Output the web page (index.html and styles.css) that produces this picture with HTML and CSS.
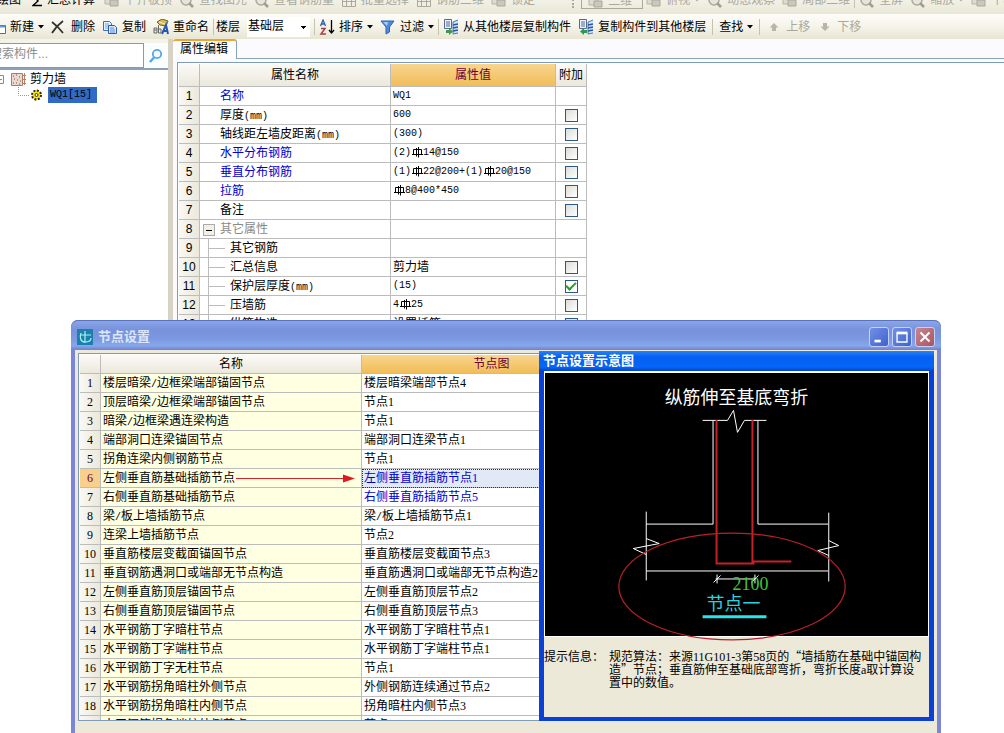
FILE: index.html
```html
<!DOCTYPE html>
<html lang="zh-CN">
<head>
<meta charset="utf-8">
<title>属性编辑</title>
<link rel="stylesheet" href="styles.css">
</head>
<body>
<svg class="defs" aria-hidden="true">
  <symbol id="rebar" viewBox="0 0 12 12"><path d="M5.500 2v8.500M7.500 1v10.500M2.500 8V3.500h8V8M1 8.500h11" fill="none" stroke="#000"/></symbol>
  <symbol id="drop" viewBox="0 0 6 4"><path d="M0 0h6L3 3.500z"/></symbol>
  <symbol id="blob" viewBox="0 0 16 16"><path d="M1 4h9v8H1z" fill="#dddccd" stroke="#b5b4a6"/><path d="M6 8h8v6H6z" fill="#c9c8ba" stroke="#aaa99c"/></symbol>
  <symbol id="grid" viewBox="0 0 16 16"><path d="M1.500 4v10.500h13V4M1 9.500h13M5.500 4v10M10.500 4v10" fill="none" stroke="#aaa99c"/></symbol>
  <symbol id="lens" viewBox="0 0 16 16"><circle cx="7" cy="8" r="5" fill="#e6e5d8" stroke="#aaa99c" stroke-width="1.500"/><path d="M10 11l4 4" stroke="#9f9e92" stroke-width="2.500"/></symbol>
  <symbol id="floors" viewBox="0 0 16 16"><path d="M1.500.500h7v9h-7z" fill="#eef3fb" stroke="#586885"/><path d="M3 3h4M3 5h4M3 7h4" stroke="#4766a4"/><path d="M15 1l-5 2v12l5-1" fill="#cfe0f7" stroke="#4b78b5"/><path d="M10 6l5-1M10 9l5-1M10 12l5-1" stroke="#28599f" stroke-width="1.500"/></symbol>
</svg>

<main class="app">
  <div class="bar bar-top">
    <button class="tool">绘图</button>
    <button class="tool gap-l"><svg width="11" height="16" viewBox="0 0 11 16"><path d="M9 4H2l4 5-5 4.500h9" fill="none" stroke="#000" stroke-width="1.500"/></svg>汇总计算</button>
    <button class="tool off gap-m"><svg class="ic"><use href="#blob"/></svg>平齐板顶</button>
    <button class="tool off"><svg class="ic"><use href="#lens"/></svg>查找图元</button>
    <button class="tool off"><svg class="ic"><use href="#lens"/></svg>查看钢筋量</button>
    <button class="tool off"><svg class="ic"><use href="#grid"/></svg>批量选择</button>
    <button class="tool off"><svg class="ic"><use href="#grid"/></svg>钢筋三维</button>
    <button class="tool off"><svg class="ic"><use href="#blob"/></svg>锁定</button>
    <span class="grip"></span>
    <button class="tool off framed"><svg class="ic"><use href="#blob"/></svg>二维</button>
    <button class="tool off"><svg class="ic"><use href="#blob"/></svg>俯视<svg class="arrow"><use href="#drop"/></svg></button>
    <button class="tool off"><svg class="ic"><use href="#lens"/></svg>动态观察</button>
    <button class="tool off"><svg class="ic"><use href="#blob"/></svg>局部三维</button>
    <span class="sep"></span>
    <button class="tool off"><svg class="ic"><use href="#lens"/></svg>全屏</button>
    <button class="tool off"><svg class="ic"><use href="#lens"/></svg>缩放<svg class="arrow"><use href="#drop"/></svg></button>
    <button class="tool off"><svg class="ic"><use href="#blob"/></svg>平移</button>
  </div>

  <div class="bar bar-edit">
    <button class="tool"><svg width="6" height="16" viewBox="0 0 6 16"><path d="M0 6.500h5.500v8H0" fill="#fff" stroke="#3f73b5"/><path d="M0 7.500h5" stroke="#5b96dd" stroke-width="2"/></svg>新建<svg class="arrow"><use href="#drop"/></svg></button>
    <button class="tool"><svg class="ic" viewBox="0 0 16 16"><path d="M1 3c4 3 8 7 11 11M12 2C8 5 4 9 1 14" fill="none" stroke="#333" stroke-width="1.800"/></svg>删除</button>
    <button class="tool"><svg class="ic" viewBox="0 0 16 16"><path d="M1.500 2.500h6l2 2v7h-8z" fill="#e6f0fd" stroke="#3a6fc0"/><path d="M3 5h4M3 7h4M3 9h3" stroke="#79a5e3"/><path d="M6.500 6.500h6l2 2v6h-8z" fill="#d9e8fc" stroke="#2a5db2"/><path d="M8 9h4M8 11h5M8 13h5" stroke="#5a8cd8"/></svg>复制</button>
    <button class="tool"><svg class="ic" viewBox="0 0 16 16"><path d="M4 3l5-3 6 2-2 5-6-1z" fill="#d8b94e" stroke="#6c6030"/><path d="M6 3l6 2" stroke="#fff1a8"/><path d="M1 9h3v5H1zm0 2h3M5.500 6v8h2.500v-4H6" fill="none" stroke="#666"/><path d="M9 15l4-9 2 9M10 12h5" fill="none" stroke="#2559b8" stroke-width="2"/></svg>重命名</button>
    <span class="sep"></span>
    <label class="floor" for="floor">楼层</label>
    <select id="floor" class="combo"><option>基础层</option></select>
    <span class="sep"></span>
    <button class="tool"><svg class="ic" viewBox="0 0 16 16"><path d="M1.500 7L4 1l2.500 6M2.500 5h3" fill="none" stroke="#2b5fae" stroke-width="1.300"/><path d="M2 9.500h4L2 15h5" fill="none" stroke="#b13b45" stroke-width="1.500"/><path d="M12.500 1v12M10 11l2.500 3 2.500-3" fill="none" stroke="#000" stroke-width="1.300"/></svg>排序<svg class="arrow"><use href="#drop"/></svg></button>
    <button class="tool"><svg class="ic" viewBox="0 0 16 16"><path d="M1 2h13L9.500 8v5L6 15V8z" fill="#4e8ce0" stroke="#2c62b8"/><path d="M3 3h5l-1 4z" fill="#a9cbf7"/></svg>过滤<svg class="arrow"><use href="#drop"/></svg></button>
    <span class="sep"></span>
    <button class="tool"><svg class="ic"><use href="#floors"/><path d="M3 11h3v-2l4 3.500L6 16v-2H3z" fill="#3d9a48"/></svg>从其他楼层复制构件</button>
    <button class="tool"><svg class="ic"><use href="#floors"/><path d="M9 11H6V9l-4 3.500L6 16v-2h3z" fill="#2c9b52"/></svg>复制构件到其他楼层</button>
    <span class="sep wide"></span>
    <button class="tool">查找<svg class="arrow"><use href="#drop"/></svg></button>
    <span class="sep wide"></span>
    <button class="tool off"><svg class="ic" viewBox="0 0 16 16"><path d="M8 4l4.500 4.500H10V12H6V8.500H3.500z" fill="#b7b6a9"/></svg>上移</button>
    <button class="tool off"><svg class="ic" viewBox="0 0 16 16"><path d="M8 12l4.500-4.500H10V4H6v3.500H3.500z" fill="#b7b6a9"/></svg>下移</button>
  </div>

  <div class="work">
    <aside class="side">
      <div class="search">
        <input type="text" class="search-box" placeholder="搜索构件..." aria-label="搜索构件">
        <button class="search-go" aria-label="搜索"><svg width="16" height="16" viewBox="0 0 16 16"><circle cx="9" cy="6" r="4.200" fill="#f1f9ff" stroke="#5aa5e6" stroke-width="1.800"/><path d="M6 9.500L2 14" stroke="#5aa5e6" stroke-width="2.500"/></svg></button>
      </div>
      <ul class="tree">
        <li class="node"><svg width="28" height="16" viewBox="0 0 28 16"><path d="M-4.500 4.500h8v8h-8zM-1 8.500h3" fill="#fff" stroke="#7b8ea6"/><path d="M11.500 2.500h11v12h-11z" fill="#ead9d0" stroke="#a87a68"/><path d="M13 5h1M16 4h1M19 6h1M14 8h1M17 9h1M20 10h1M13 12h1M16 12h1M19 13h1" stroke="#8b4c3c"/><path d="M24.500 2v12M22 4.500h4M22 8.500h4M22 12.500h4" stroke="#b9815f"/></svg>剪力墙</li>
        <li class="node"><svg width="46" height="16" viewBox="0 0 46 16"><path d="M18.500 0v8.500H30" fill="none" stroke="#999" stroke-dasharray="1 1"/><circle cx="36.500" cy="8" r="4.500" fill="#ffe600" stroke="#222" stroke-width="2" stroke-dasharray="2 1.500"/><circle cx="36.500" cy="8" r="1.500" fill="#fff" stroke="#333"/></svg><span class="picked mono">WQ1[15]</span></li>
      </ul>
    </aside>
    <section class="props">
      <div class="tabs"><button class="tab">属性编辑</button></div>
      <div class="sheet">
        <table class="grid prop-grid">
          <colgroup><col class="c-num"><col class="c-name"><col class="c-value"><col class="c-check"></colgroup>
          <thead><tr><th></th><th>属性名称</th><th class="hot">属性值</th><th>附加</th></tr></thead>
          <tbody>
            <tr><th>1</th><td class="name link">名称</td><td class="mono">WQ1</td><td></td></tr>
            <tr><th>2</th><td class="name">厚度<span class="mono">(mm)</span></td><td class="mono">600</td><td class="mark"><input type="checkbox" aria-label="厚度"></td></tr>
            <tr><th>3</th><td class="name">轴线距左墙皮距离<span class="mono">(mm)</span></td><td class="mono">(300)</td><td class="mark"><input type="checkbox" aria-label="轴线距左墙皮距离"></td></tr>
            <tr><th>4</th><td class="name link">水平分布钢筋</td><td class="mono">(2)<svg class="bar-sign"><use href="#rebar"/></svg>14@150</td><td class="mark"><input type="checkbox" aria-label="水平分布钢筋"></td></tr>
            <tr><th>5</th><td class="name link">垂直分布钢筋</td><td class="mono">(1)<svg class="bar-sign"><use href="#rebar"/></svg>22@200+(1)<svg class="bar-sign"><use href="#rebar"/></svg>20@150</td><td class="mark"><input type="checkbox" aria-label="垂直分布钢筋"></td></tr>
            <tr><th>6</th><td class="name link">拉筋</td><td class="mono"><svg class="bar-sign"><use href="#rebar"/></svg>8@400*450</td><td class="mark"><input type="checkbox" aria-label="拉筋"></td></tr>
            <tr><th>7</th><td class="name">备注</td><td></td><td class="mark"><input type="checkbox" aria-label="备注"></td></tr>
            <tr><th>8</th><td class="group"><button class="fold" aria-label="折叠"></button>其它属性</td><td></td><td></td></tr>
            <tr><th>9</th><td class="child">其它钢筋</td><td></td><td></td></tr>
            <tr><th>10</th><td class="child">汇总信息</td><td>剪力墙</td><td class="mark"><input type="checkbox" aria-label="汇总信息"></td></tr>
            <tr><th>11</th><td class="child">保护层厚度<span class="mono">(mm)</span></td><td class="mono">(15)</td><td class="mark"><input type="checkbox" checked aria-label="保护层厚度"></td></tr>
            <tr><th>12</th><td class="child">压墙筋</td><td class="mono">4<svg class="bar-sign"><use href="#rebar"/></svg>25</td><td class="mark"><input type="checkbox" aria-label="压墙筋"></td></tr>
            <tr><th>13</th><td class="child">纵筋构造</td><td>设置插筋</td><td class="mark"><input type="checkbox" aria-label="纵筋构造"></td></tr>
          </tbody>
        </table>
      </div>
    </section>
  </div>
</main>

<section class="dialog" role="dialog" aria-label="节点设置">
  <header class="title">
    <svg class="ic" viewBox="0 0 16 16"><path d="M0 0h16v16H0z" fill="#1d7fae"/><path d="M8 2v12M3 6h11M4 4c-2 5 0 9 4 9s6-2 6-4" fill="none" stroke="#a8f0f4" stroke-width="1.200"/></svg>
    <h1>节点设置</h1>
    <button class="win" aria-label="最小化"><svg viewBox="0 0 20 20"><path d="M5 13h7v3H5z" fill="#fff"/></svg></button>
    <button class="win" aria-label="最大化"><svg viewBox="0 0 20 20"><path d="M4.500 6h11v9.500h-11zM4 6h12" fill="none" stroke="#fff" stroke-width="1.500"/><path d="M4 4h12v3H4z" fill="#fff"/></svg></button>
    <button class="win close" aria-label="关闭"><svg viewBox="0 0 20 20"><path d="M5 5l10 10M15 5L5 15" stroke="#fff" stroke-width="2.200"/></svg></button>
  </header>
  <div class="client">
    <div class="list">
      <table class="grid node-grid">
        <colgroup><col class="c-num"><col class="c-node"><col class="c-pic"></colgroup>
        <thead><tr><th></th><th>名称</th><th class="hot">节点图</th></tr></thead>
        <tbody>
          <tr><th>1</th><td>楼层暗梁<span class="mono">/</span>边框梁端部锚固节点</td><td>楼层暗梁端部节点4</td></tr>
          <tr><th>2</th><td>顶层暗梁<span class="mono">/</span>边框梁端部锚固节点</td><td>节点1</td></tr>
          <tr><th>3</th><td>暗梁<span class="mono">/</span>边框梁遇连梁构造</td><td>节点1</td></tr>
          <tr><th>4</th><td>端部洞口连梁锚固节点</td><td>端部洞口连梁节点1</td></tr>
          <tr><th>5</th><td>拐角连梁内侧钢筋节点</td><td>节点1</td></tr>
          <tr class="current"><th>6</th><td>左侧垂直筋基础插筋节点</td><td class="link">左侧垂直筋插筋节点1</td></tr>
          <tr><th>7</th><td>右侧垂直筋基础插筋节点</td><td class="link">右侧垂直筋插筋节点5</td></tr>
          <tr><th>8</th><td>梁<span class="mono">/</span>板上墙插筋节点</td><td>梁<span class="mono">/</span>板上墙插筋节点1</td></tr>
          <tr><th>9</th><td>连梁上墙插筋节点</td><td>节点2</td></tr>
          <tr><th>10</th><td>垂直筋楼层变截面锚固节点</td><td>垂直筋楼层变截面节点3</td></tr>
          <tr><th>11</th><td>垂直钢筋遇洞口或端部无节点构造</td><td>垂直筋遇洞口或端部无节点构造2</td></tr>
          <tr><th>12</th><td>左侧垂直筋顶层锚固节点</td><td>左侧垂直筋顶层节点2</td></tr>
          <tr><th>13</th><td>右侧垂直筋顶层锚固节点</td><td>右侧垂直筋顶层节点3</td></tr>
          <tr><th>14</th><td>水平钢筋丁字暗柱节点</td><td>水平钢筋丁字暗柱节点1</td></tr>
          <tr><th>15</th><td>水平钢筋丁字端柱节点</td><td>水平钢筋丁字端柱节点1</td></tr>
          <tr><th>16</th><td>水平钢筋丁字无柱节点</td><td>节点1</td></tr>
          <tr><th>17</th><td>水平钢筋拐角暗柱外侧节点</td><td>外侧钢筋连续通过节点2</td></tr>
          <tr><th>18</th><td>水平钢筋拐角暗柱内侧节点</td><td>拐角暗柱内侧节点3</td></tr>
          <tr><th></th><td>水平钢筋拐角端柱外侧节点</td><td>节点3</td></tr>
        </tbody>
      </table>
      <svg class="pointer" width="120" height="10" viewBox="0 0 120 10"><path d="M0 5.500h110" stroke="#d8232a"/><path d="M107 1.500l12 4-12 4z" fill="#e01820"/></svg>
    </div>
    <section class="preview">
      <h2>节点设置示意图</h2>
      <div class="drawing">
        <svg class="cad" viewBox="0 0 384 264">
          <text x="120" y="31" class="cad-title">纵筋伸至基底弯折</text>
          <g fill="none" stroke="#fff">
            <path d="M158 47.500h25l6-10 4 22 7-12h22M168.500 48v103.500h-67M213.500 48v103.500h70.500M101.500 198.500H284M101.500 139v69M284.500 140v69"/>
            <path d="M101.500 166l13 5-26 5 13 6M284.500 168l10 5-21 5 11 5"/>
            <path d="M171 206.500h40M172.500 202v9M210.500 202v9M169 210l7-7M207 210l7-7"/>
          </g>
          <path d="M172 47v144h38M208 47v143M208 189h39" fill="none" stroke="#c8202a" stroke-width="2"/>
          <text x="188" y="218" class="cad-size">2100</text>
          <text x="162" y="238" class="cad-label">节点一</text>
          <path d="M158 244.500h64" stroke="#28e4ee" stroke-width="3"/>
          <ellipse cx="187.500" cy="214" rx="113.500" ry="53.500" fill="none" stroke="#b8202a" stroke-width="1.200"/>
        </svg>
      </div>
      <div class="hint"><span>提示信息：</span><p>规范算法：来源<span class="digits">11G101-3</span>第<span class="digits">58</span>页的“墙插筋在基础中锚固构造”节点；垂直筋伸至基础底部弯折，弯折长度<span class="digits">a</span>取计算设置中的数值。</p></div>
    </section>
  </div>
</section>
</body>
</html>
```

FILE: styles.css
```css
* { box-sizing: border-box; }
body {
  margin: 0;
  height: 100vh;
  overflow: hidden;
  position: relative;
  background: #fff;
  color: #000;
  font: 12px/16px "Liberation Sans", "Noto Sans CJK SC", sans-serif;
}
button, input, select { font: inherit; color: inherit; }
button { border: 0; padding: 0; background: none; }
.defs { position: absolute; width: 0; height: 0; }
.mono { font-family: "Liberation Mono", "Noto Sans CJK SC", monospace; font-size: 10px; }
.ic { width: 16px; height: 16px; flex: none; }
.app { height: 100%; display: flex; flex-direction: column; }

/* toolbars */
.bar { display: flex; white-space: nowrap; overflow: hidden; flex: none; }
.bar-top {
  height: 14px;
  gap: 7px;
  align-items: flex-start;
  background: linear-gradient(#f2f1e6, #e9e7d6);
}
.bar-top > * { margin-top: -8px; }
.bar-top .tool:first-child { margin-left: -3px; }
.bar-top .gap-l { margin-left: 4px; }
.bar-top .gap-m { margin-left: 2px; }
.bar-edit {
  height: 25px;
  gap: 7px;
  align-items: center;
  background: linear-gradient(#fdfcf8, #f5f4ea 50%, #e8e5d2);
}
.tool { display: flex; align-items: center; gap: 4px; flex: none; }
.off { color: #aaa99c; fill: #aaa99c; }
.arrow { width: 6px; height: 4px; flex: none; }
.sep { width: 1px; height: 16px; flex: none; margin-left: -3px; margin-right: -3px; background: #c5c2b0; }
.sep.wide { margin-left: -1px; margin-right: -1px; }
.grip { width: 2px; height: 16px; margin-left: 30px; border-left: 2px dotted #aaa99c; }
.framed { width: 62px; height: 17px; margin-right: -4px; border: 1px solid #aaa99c; padding-left: 6px; }
.floor { margin-left: -2px; }
.combo {
  appearance: none;
  width: 63px;
  height: 20px;
  border: 0;
  padding: 0 0 2px 1px;
  background: linear-gradient(#000, #000) 54px 9px / 5px 1px no-repeat,
    linear-gradient(#000, #000) 55px 10px / 3px 1px no-repeat,
    linear-gradient(#000, #000) 56px 11px / 1px 1px no-repeat, #fff;
}

/* component tree */
.work { flex: 1; min-height: 0; display: flex; }
.side { width: 168px; flex: none; overflow: hidden; background: #fff; }
.search { display: flex; height: 31px; padding-top: 4px; background: #f4f3ea; border-bottom: 2px solid #8ba1b8; }
.search-box {
  flex: 1;
  min-width: 0;
  margin-left: -14px;
  border: 1px solid #7f9db9;
  padding: 0 3px 3px;
  background: #fff;
}
.search-box::placeholder { color: #8d8d8d; }
.search-go { width: 24px; display: grid; place-items: center; background: #fbfdff; }
.tree { list-style: none; margin: 0; padding: 1px 0; }
.node { display: flex; align-items: center; gap: 2px; height: 16px; }
.picked { background: #316ac5; padding: 0 5px 0 2px; }

/* property sheet */
.props {
  flex: 1;
  min-width: 0;
  display: flex;
  flex-direction: column;
  border-left: 5px solid #d6d3c4;
  background: #fbfbfe;
}
.tabs { height: 20px; flex: none; border-bottom: 1px solid #8ba1b8; }
.tab {
  height: 20px;
  padding: 0 8px 2px 7px;
  background: #fdfdff;
  border-top: 2px solid #f0a52c;
  border-right: 1px solid #8ba1b8;
  border-radius: 3px 3px 0 0;
}
.sheet {
  flex: 1;
  min-height: 0;
  overflow: hidden;
  margin: 3px 0 0 4px;
  padding: 1px 0 0 1px;
  border: solid #7f9db9;
  border-width: 1px 0 0 1px;
  background: #fff;
}
.grid { border-collapse: separate; border-spacing: 0; table-layout: fixed; white-space: nowrap; }
.grid th, .grid td {
  height: 19px;
  padding: 0 2px;
  border: solid #bcbcbc;
  border-width: 0 1px 1px 0;
  line-height: 18px;
  font-weight: normal;
  text-align: left;
  overflow: hidden;
}
.grid span.mono { line-height: 10px; }
.grid thead th { text-align: center; background: linear-gradient(#fbfaf7, #ebe8dc); }
.grid tbody th { text-align: center; padding: 0; background: linear-gradient(90deg, #f9f8f3, #ebe8db); }
.grid thead .hot { color: #6a0035; background: linear-gradient(#f8d58e, #f1bd58); }
.grid .link { color: #0000d0; }
.prop-grid { width: 408px; }
.prop-grid thead th { height: 23px; padding: 0; }
.c-num { width: 21px; }
.c-name { width: 191px; }
.c-value { width: 165px; }
.c-check { width: 31px; }
.prop-grid .name { padding-left: 20px; }
.prop-grid .group { padding-left: 3px; color: #8a8a8a; }
.prop-grid .child {
  padding-left: 30px;
  background: linear-gradient(#bcbcbc, #bcbcbc) 8px 0 / 1px 100% no-repeat,
    linear-gradient(#bcbcbc, #bcbcbc) 8px 9px / 17px 1px no-repeat;
}
.fold {
  width: 12px;
  height: 12px;
  margin-right: 5px;
  vertical-align: -2px;
  border: 1px solid #aaa;
  background: linear-gradient(#000, #000) center / 6px 1px no-repeat, #f1efe6;
}
.bar-sign { width: 12px; height: 12px; vertical-align: -3px; }
.prop-grid .mark { text-align: center; line-height: 0; }
.mark input {
  appearance: none;
  width: 13px;
  height: 13px;
  margin: 0;
  border: 1px solid #2c5a87;
  background: linear-gradient(135deg, #dcdcd7, #fff);
}
.mark input:checked {
  background: #fff;
  display: inline-grid;
  place-items: center;
}
.mark input:checked::after {
  content: "";
  width: 8px;
  height: 4px;
  margin-bottom: 3px;
  border: solid #21a121;
  border-width: 0 0 2px 2px;
  transform: rotate(-45deg);
}

/* node settings window */
.dialog {
  position: absolute;
  left: 71px;
  top: 320px;
  bottom: -8px;
  width: 870px;
  display: flex;
  flex-direction: column;
  border: solid #7b86d6;
  border-width: 0 4px;
  border-radius: 7px 7px 0 0;
  background: #ece9d8;
}
.title {
  height: 30px;
  flex: none;
  display: flex;
  align-items: center;
  gap: 3px;
  margin: 0 -4px;
  padding: 2px 6px 0;
  border-radius: 7px 7px 0 0;
  border-top: 1px solid #5872c0;
  background: linear-gradient(#8ba5e8, #7892dc 30%, #7b98e0 60%, #85a8ea 85%, #747ed2);
}
.title h1 { flex: 1; margin: 0 0 0 2px; font-size: 13px; line-height: 18px; color: #dce6fb; }
.win { width: 20px; height: 20px; border: 1px solid #c4d2f6; border-radius: 3px; background: linear-gradient(135deg, #7390e6, #3e62cf); }
.win svg { display: block; width: 18px; height: 18px; }
.win.close { background: linear-gradient(135deg, #c78692, #aa5460); }
.client { flex: 1; min-height: 0; position: relative; padding: 3px 3px 20px; }
.list {
  position: relative;
  height: 368px;
  overflow: hidden;
  padding: 1px;
  border: 1px solid #7f9db9;
  background: #fff;
  font-family: "Liberation Serif", "Noto Sans CJK SC", serif;
}
.node-grid { width: 542px; }
.c-node { width: 261px; }
.c-pic { width: 260px; }
.node-grid tbody td:nth-child(2) { background: #ffffe1; }
.node-grid tbody .current th { background: #f9cf8c; color: #6a0035; }
.node-grid tbody .current td:last-child { background: #e2e9f6; outline: 1px dotted #333; outline-offset: -1px; }
.pointer { position: absolute; left: 157px; top: 119px; }

/* detail drawing window */
.preview {
  position: absolute;
  right: 3px;
  top: 1px;
  width: 395px;
  height: 370px;
  display: flex;
  flex-direction: column;
  border: solid #0a3fd8;
  border-width: 0 5px 4px;
  background: #ece9d8;
}
.preview h2 {
  margin: 0 -5px;
  height: 20px;
  flex: none;
  padding: 2px 4px;
  font-size: 13px;
  line-height: 16px;
  color: #fff;
  background: linear-gradient(#2a82f5, #0560f2 30%, #0566f7 80%, #0442c8);
}
.drawing { border: solid #fff; border-width: 2px 1px 1px; background: #000; line-height: 0; }
.cad { display: block; width: 100%; overflow: visible; position: relative; }
.cad-title { font: 18px "Noto Sans CJK SC", sans-serif; fill: #fff; }
.cad-size { font: 18px "Liberation Serif", serif; fill: #3ec63e; }
.cad-label { font: 18px "Noto Sans CJK SC", sans-serif; fill: #28d4de; }
.hint {
  display: flex;
  gap: 5px;
  padding-top: 13px;
  font-family: "Noto Sans CJK SC", sans-serif;
  line-height: 12px;
  text-spacing-trim: space-all;
}
.hint > span { flex: none; }
.hint p { margin: 0; flex: 1; max-width: 316px; }
.digits { font-family: "Liberation Serif", serif; }
```
